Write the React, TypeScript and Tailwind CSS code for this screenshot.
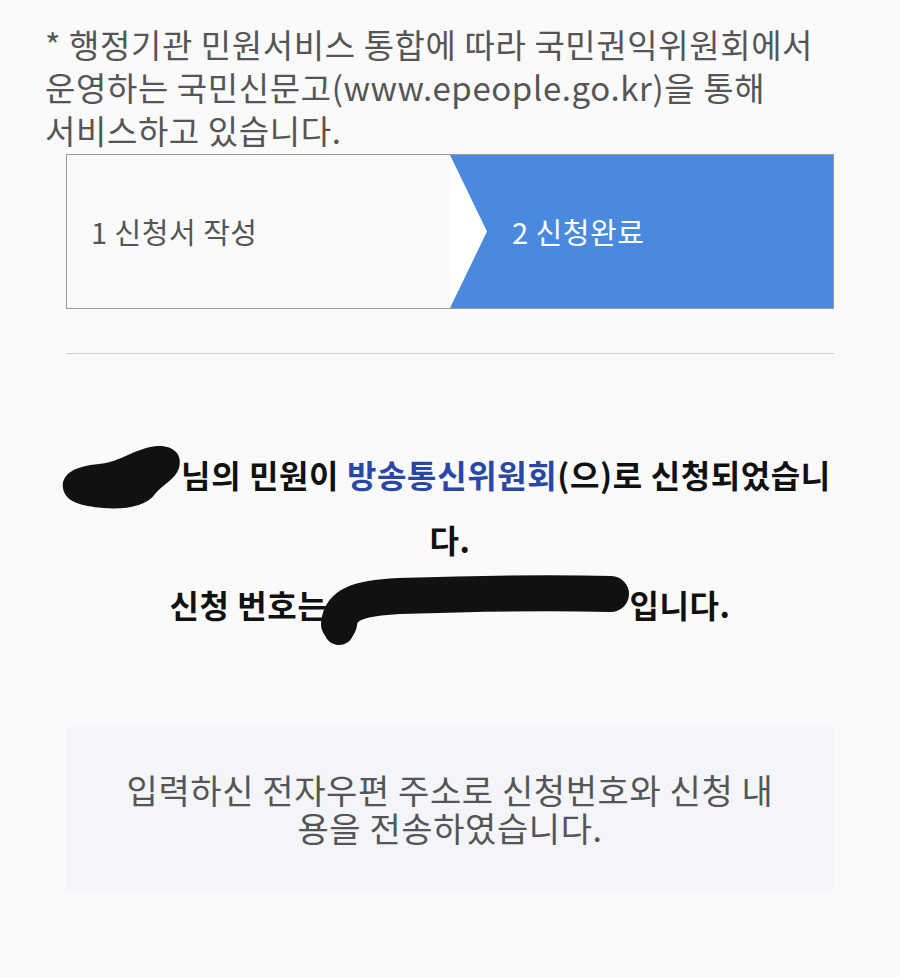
import React from 'react';

const font = { fontFamily: '"Noto Sans CJK KR", "Noto Sans", sans-serif' };

const NameBlot: React.FC = () => (
  <span className="relative inline-block w-[112px] h-[30px] align-middle">
    <svg className="absolute left-[-10px] top-[-22px]" width="126" height="70" viewBox="0 0 126 70">
      <path
        d="M4 46 C2 32 16 24 40 22 C62 20 76 6 98 4 C114 3 124 12 120 26 C116 38 104 42 96 52 C88 64 66 68 44 66 C22 64 6 60 4 46 Z"
        fill="#111"
      />
    </svg>
  </span>
);

const NumberBlot: React.FC = () => (
  <span className="relative inline-block w-[302px] h-[30px] align-middle">
    <svg className="absolute left-[-8px] top-[-22px]" width="316" height="74" viewBox="0 0 316 74">
      <path
        d="M20 52 C22 32 40 26 80 24 C140 22 220 20 292 22"
        stroke="#111"
        strokeWidth="36"
        strokeLinecap="round"
        fill="none"
      />
      <path d="M22 48 L20 58" stroke="#111" strokeWidth="30" strokeLinecap="round" />
    </svg>
  </span>
);

export default function App() {
  return (
    <div className="min-h-screen bg-[#fafafa] pb-[80px]" style={font}>
      <p className="px-[45px] pt-[23px] text-[33px] leading-[43px] text-[#555] tracking-[0.6px] whitespace-nowrap">
        * 행정기관 민원서비스 통합에 따라 국민권익위원회에서
        <br />
        운영하는 국민신문고(www.epeople.go.kr)을 통해
        <br />
        서비스하고 있습니다.
      </p>

      <div className="mx-[66px] mt-[2px] flex h-[155px] border border-[#9a9a9a] bg-white">
        <div className="flex w-[383px] items-center bg-[#fafafa] pl-[24px] text-[29px] tracking-[0.5px] text-[#555]">
          1 신청서 작성
        </div>
        <div className="flex flex-1 items-center bg-[#4a8ade] pl-[62px] text-[29px] tracking-[0.5px] text-white [clip-path:polygon(0_0,100%_0,100%_100%,0_100%,37px_50%)]">
          2 신청완료
        </div>
      </div>

      <div className="mx-[66px] mt-[44px] h-px bg-[#cfcfcf]" />

      <div className="mt-[88px] whitespace-nowrap text-center text-[32px] font-bold leading-[65px] tracking-[0.6px] text-[#111]">
        <p>
          <NameBlot />
          님의 민원이 <span className="text-[#2b47a6]">방송통신위원회</span>(으)로 신청되었습니
          <br />
          다.
        </p>
        <p>
          신청 번호는
          <NumberBlot />
          입니다.
        </p>
      </div>

      <div className="mx-[66px] mt-[90px] flex h-[164px] items-center justify-center bg-[#f4f5f9] text-center text-[34px] leading-[38px] tracking-[0.6px] text-[#555] whitespace-nowrap">
        <p>
          입력하신 전자우편 주소로 신청번호와 신청 내
          <br />
          용을 전송하였습니다.
        </p>
      </div>
    </div>
  );
}
